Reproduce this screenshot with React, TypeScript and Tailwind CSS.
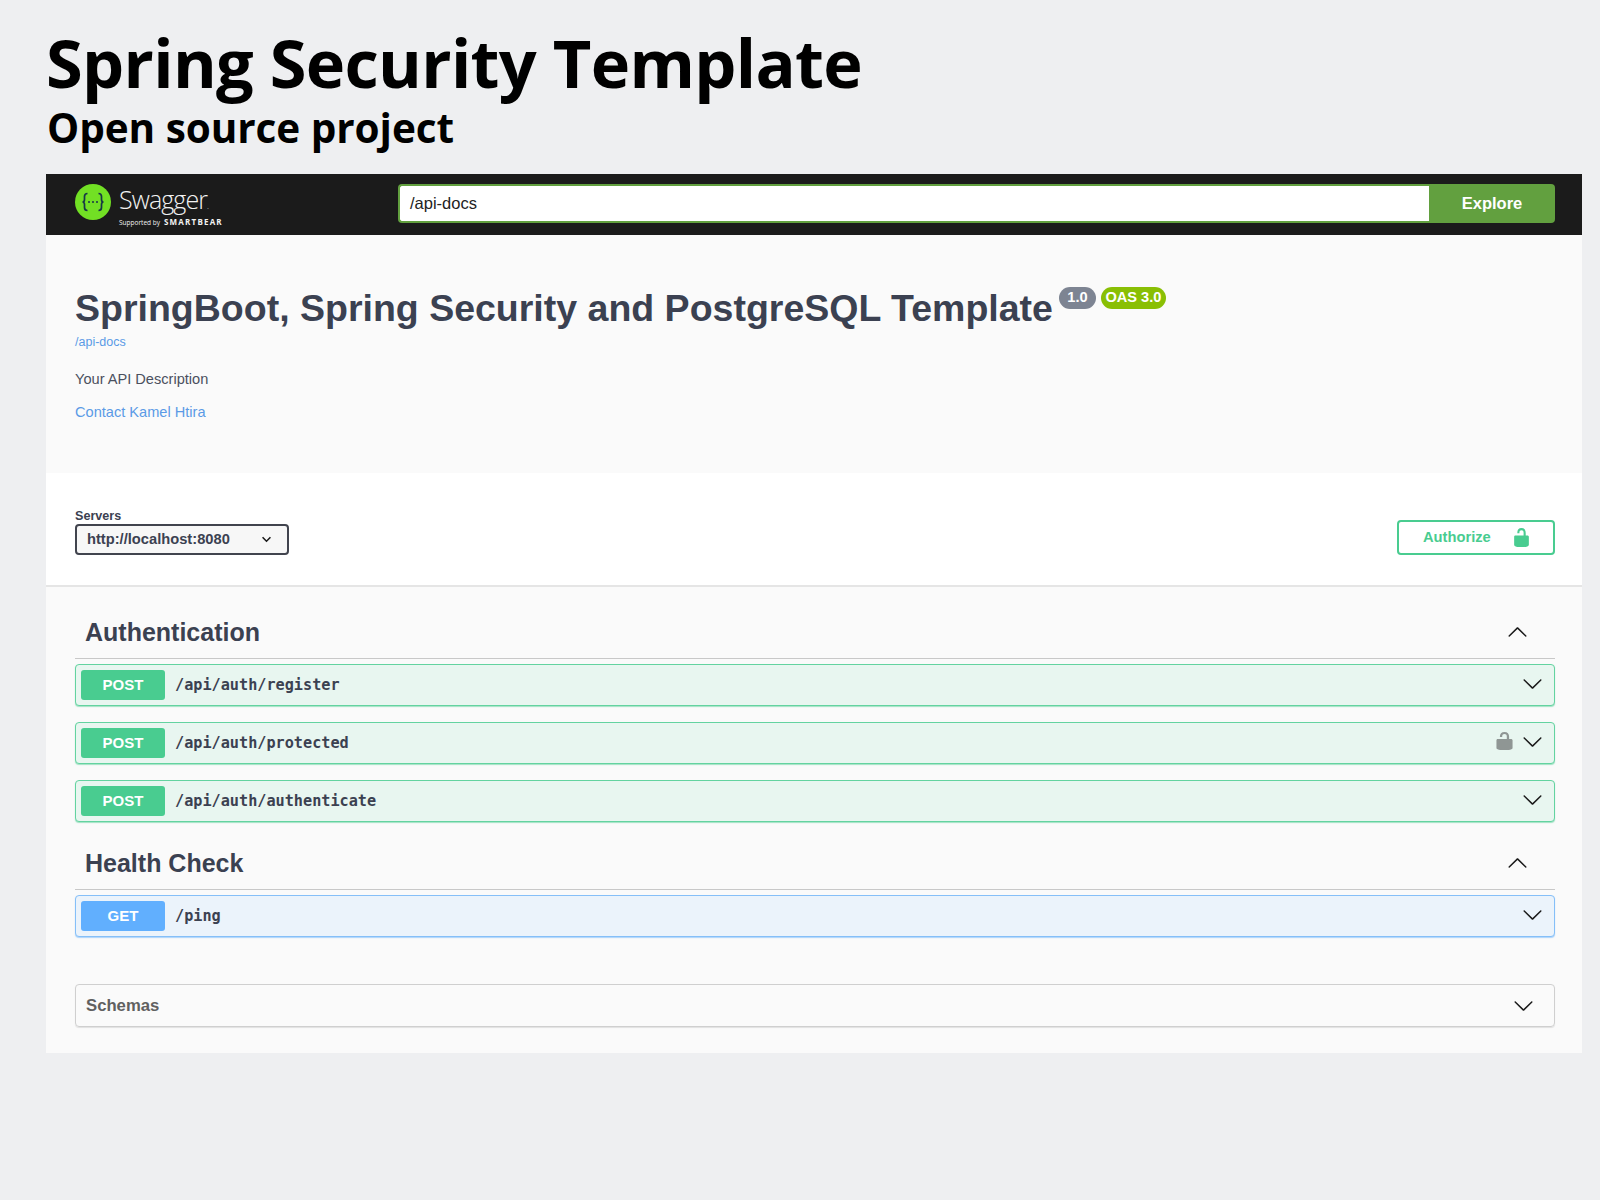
const LOCK =
  'M15.8 8H14V5.6C14 2.703 12.665 1 10 1 7.334 1 6 2.703 6 5.6V6h2v-.801C8 3.754 8.797 3 10 3c1.203 0 2 .754 2 2.199V8H4c-.553 0-1 .646-1 1.199V17c0 .549.428 1.139.951 1.307l1.197.387C5.672 18.861 6.55 19 7.1 19h5.8c.549 0 1.428-.139 1.951-.307l1.196-.387c.524-.167.953-.757.953-1.306V9.199C17 8.646 16.352 8 15.8 8z';
const CHEVRON =
  'M17.418 6.109c.272-.268.709-.268.979 0s.271.701 0 .969l-7.908 7.83c-.27.268-.707.268-.979 0l-7.908-7.83c-.27-.268-.27-.701 0-.969.271-.268.709-.268.979 0L10 13.25l7.418-7.141z';

function Chevron({ up, className }: { up?: boolean; className?: string }) {
  return (
    <svg viewBox="0 0 20 20" className={`w-[21px] h-[21px] fill-[#1a1a1a] ${up ? 'rotate-180' : ''} ${className ?? ''}`}>
      <path d={CHEVRON} />
    </svg>
  );
}

function Logo() {
  return (
    <div className="flex items-center">
      <svg viewBox="0 0 36 36" className="w-9 h-9 shrink-0 -translate-y-[3px]">
        <circle cx="18" cy="18" r="18" fill="#72e024" />
        <path
          d="M12.5 9.5c-2.5 0-3 1.2-3 3v3c0 1.400-.8 2.500-2 2.500 1.200 0 2 1.100 2 2.500v3c0 1.800.5 3 3 3M23.500 9.500c2.500 0 3 1.200 3 3v3c0 1.400.8 2.500 2 2.500-1.200 0-2 1.100-2 2.500v3c0 1.800-.5 3-3 3"
          fill="none"
          stroke="#173647"
          strokeWidth="1.7"
        />
        <circle cx="14" cy="18" r="1" fill="#173647" />
        <circle cx="18" cy="18" r="1" fill="#173647" />
        <circle cx="22" cy="18" r="1" fill="#173647" />
      </svg>
      <div className="ml-[8px] text-[#f2f2f2] font-['Open_Sans',sans-serif]">
        <div className="text-[25px] leading-[28px] mt-[4px] font-light tracking-[-0.9px]">
          Swagger<span className="text-[8px] tracking-normal">.</span>
        </div>
        <div className="flex items-baseline leading-[10px] -mt-[3px]">
          <span className="text-[6.5px] w-[45px]">Supported by</span>
          <span className="text-[8px] font-bold tracking-[1.2px]">SMARTBEAR</span>
        </div>
      </div>
    </div>
  );
}

function TopBar() {
  return (
    <div className="h-[61px] bg-[#1b1b1b] flex items-center pl-[29px] pr-[27px]">
      <div className="w-[323px] shrink-0">
        <Logo />
      </div>
      <div className="flex-1 flex h-[39px] mb-[2px]">
        <div className="flex-1 bg-white border-2 border-r-0 border-[#62a03f] rounded-l-[4px] pl-[10px] flex items-center text-[16.5px] text-[#222]">
          /api-docs
        </div>
        <div className="w-[126px] bg-[#62a03f] rounded-r-[4px] flex items-center justify-center text-white font-bold text-[16.5px]">
          Explore
        </div>
      </div>
    </div>
  );
}

function Info() {
  return (
    <div className="h-[238px] pl-[29px] pt-[51px] text-[#3b4151]">
      <div className="flex items-start">
        <h2 className="text-[37.5px] leading-[45px] font-bold">SpringBoot, Spring Security and PostgreSQL Template</h2>
        <span className="ml-[6px] mt-[1px] h-[22px] w-[37px] rounded-full bg-[#7d8492] text-white text-[14.6px] font-bold flex items-center justify-center">
          1.0
        </span>
        <span className="ml-[5px] mt-[1px] h-[22px] w-[65px] rounded-full bg-[#89bf04] text-white text-[14.6px] font-bold flex items-center justify-center">
          OAS 3.0
        </span>
      </div>
      <div className="text-[12.5px] leading-[16px] text-[#5b9ae6] mt-[3px]">/api-docs</div>
      <p className="text-[14.6px] leading-[20px] text-[#4a505e] mt-[19px]">Your API Description</p>
      <p className="text-[14.6px] leading-[20px] text-[#5b9ae6] mt-[13px]">Contact Kamel Htira</p>
    </div>
  );
}

function Servers() {
  return (
    <div className="h-[114px] bg-white border-b-2 border-[#e5e5e5] pl-[29px] pr-[27px] pt-[36px] flex justify-between items-start">
      <div className="w-[214px]">
        <div className="text-[12.6px] leading-[14px] font-bold text-[#3b4151] mb-[1px]">Servers</div>
        <div className="h-[31px] bg-[#f7f7f7] border-2 border-[#41444e] rounded-[4px] pl-[10px] pr-[15px] flex items-center justify-between text-[14.7px] font-bold text-[#3b4151]">
          http://localhost:8080
          <svg viewBox="0 0 12 8" className="w-[11px] h-[7px]">
            <path d="M1.500 1.500 6 6l4.500-4.500" fill="none" stroke="#1a1a1a" strokeWidth="1.800" />
          </svg>
        </div>
      </div>
      <div className="mt-[11px] w-[158px] h-[35px] border-2 border-[#49cc90] rounded-[4px] flex items-center pl-[24px] text-[14.7px] font-bold text-[#49cc90]">
        Authorize
        <svg viewBox="0 0 20 20" className="w-[21px] h-[21px] ml-[20px] fill-[#49cc90]">
          <path d={LOCK} />
        </svg>
      </div>
    </div>
  );
}

type Method = 'POST' | 'GET';

function Operation({ method, path, locked }: { method: Method; path: string; locked?: boolean }) {
  const post = method === 'POST';
  return (
    <div
      className={`h-[42px] mb-[16px] flex items-center border rounded-[4px] pl-[5px] pr-[11px] ${
        post
          ? 'bg-[#e8f6f0] border-[#63d3a0] shadow-[0_1px_1px_rgba(73,204,144,0.5)]'
          : 'bg-[#ebf3fb] border-[#85bff8] shadow-[0_1px_1px_rgba(97,175,254,0.5)]'
      }`}
    >
      <span
        className={`w-[84px] h-[30px] rounded-[3px] text-white text-[15px] font-bold flex items-center justify-center ${
          post ? 'bg-[#49cc90]' : 'bg-[#61affe]'
        }`}
      >
        {method}
      </span>
      <span className="ml-[10px] flex-1 font-['DejaVu_Sans_Mono',monospace] text-[15.2px] font-semibold text-[#3b4151]">
        {path}
      </span>
      {locked && (
        <svg
          viewBox="0 0 20 20"
          preserveAspectRatio="none"
          className="w-[23px] h-[20px] mr-[6px] -translate-y-[2px] fill-[#8f9694]"
        >
          <path d={LOCK} />
        </svg>
      )}
      <Chevron className="-translate-y-[2px]" />
    </div>
  );
}

function TagHeader({ title, className }: { title: string; className?: string }) {
  return (
    <div
      className={`h-[50px] border-b border-[#c8c8c8] flex items-center justify-between pl-[10px] pr-[27px] pb-[3px] mb-[5px] ${className ?? ''}`}
    >
      <h3 className="text-[25px] font-bold text-[#3b4151] pt-[2px]">{title}</h3>
      <Chevron up />
    </div>
  );
}

export default function App() {
  return (
    <div className="min-h-[1200px] bg-[#eeeff1] font-['Liberation_Sans',Arial,sans-serif]">
      <div className="pl-[46px] pt-[22px] font-['Open_Sans',sans-serif] font-bold text-black">
        <h1 className="text-[66.7px] leading-[82px] tracking-[-0.67px]">Spring Security Template</h1>
        <div className="text-[40.5px] leading-[44px] ml-[1px] mt-[2px] tracking-[-0.06px]">Open source project</div>
      </div>
      <div className="ml-[46px] w-[1536px] mt-[24px] bg-[#fafafa]">
        <TopBar />
        <Info />
        <Servers />
        <div className="pl-[29px] pr-[27px] pt-[22px] pb-[26px]">
          <TagHeader title="Authentication" />
          <Operation method="POST" path="/api/auth/register" />
          <Operation method="POST" path="/api/auth/protected" locked />
          <Operation method="POST" path="/api/auth/authenticate" />
          <TagHeader title="Health Check" className="mt-[18px]" />
          <Operation method="GET" path="/ping" />
          <div className="mt-[47px] h-[43px] border border-[#cfcfcf] shadow-[0_1px_1px_rgba(0,0,0,0.1)] rounded-[4px] flex items-center justify-between pl-[10px] pr-[20px] text-[16.7px] font-bold text-[#606060]">
            Schemas
            <Chevron />
          </div>
        </div>
      </div>
    </div>
  );
}
